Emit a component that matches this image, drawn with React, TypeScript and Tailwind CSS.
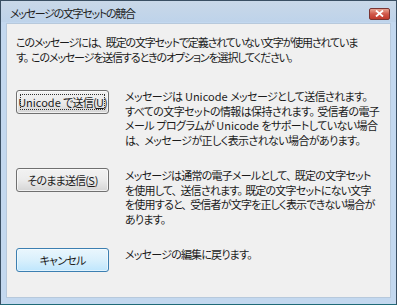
import React from "react";

const font = {
  fontFamily: '"Noto Sans CJK JP", "Noto Sans", sans-serif',
  fontFeatureSettings: '"palt"',
};

function J({ t }: { t: string }) {
  const parts: React.ReactNode[] = [];
  let buf = "";
  let k = 0;
  for (const ch of t) {
    if (ch === "、" || ch === "。") {
      if (buf) parts.push(buf);
      buf = "";
      parts.push(
        <span key={k++} className={ch === "、" ? "mr-[4px]" : "mr-[3px]"}>
          {ch}
        </span>
      );
    } else {
      buf += ch;
    }
  }
  if (buf) parts.push(buf);
  return <>{parts}</>;
}

function L({ children }: { children: React.ReactNode }) {
  return <span className="tracking-normal">{children}</span>;
}

function Btn({
  children,
  variant,
}: {
  children: React.ReactNode;
  variant: "focus" | "normal" | "default";
}) {
  const base =
    "relative w-[93px] h-[24px] rounded-[3px] flex items-center justify-center text-[11px] tracking-[-0.8px] text-[#1b1b1b] whitespace-nowrap";
  const styles =
    variant === "default"
      ? "border border-[#3c7fb1] bg-gradient-to-b from-[#eaf6fd] via-[#d9f0fc] to-[#bee6fd] shadow-[inset_0_0_0_1px_#ffffff80]"
      : "border border-[#707070] bg-gradient-to-b from-[#f2f2f2] via-[#ebebeb] to-[#d5d5d5] shadow-[inset_0_0_0_1px_#ffffffa0]";
  return (
    <div className={`${base} ${styles}`}>
      {variant === "focus" && (
        <div className="absolute inset-[3px] border border-dotted border-[#333]" />
      )}
      <span className="relative">{children}</span>
    </div>
  );
}

export default function App() {
  return (
    <div
      className="w-[397px] h-[305px] flex flex-col border border-[#3a4f63] border-b-[#1f6a78] bg-[#c3d8ef] text-[#1b1b1b]"
      style={font}
    >
      {/* Title bar */}
      <div className="h-[21px] shrink-0 flex items-center pl-[9px] pr-[6px] bg-gradient-to-b from-[#c9d8e8] to-[#bed3ea]">
        <span className="text-[11px] tracking-[-1.3px] text-[#1e1e1e] whitespace-nowrap flex-1 mt-[3px]">
          メッセージの文字セットの競合
        </span>
        <div className="w-[21px] h-[12px] mt-[4px] rounded-[2px] border border-[#7a3432] bg-gradient-to-b from-[#e8a493] via-[#d0574a] to-[#c0392b] flex items-center justify-center">
          <svg width="9" height="7" viewBox="0 0 9 7">
            <path d="M1 0.5 L8 6.5 M8 0.5 L1 6.5" stroke="#ffffff" strokeWidth="1.8" />
          </svg>
        </div>
      </div>
      {/* Content */}
      <div className="flex-1 mx-[5px] mt-[1px] mb-[6px] bg-[#f0f0f0] border border-[#b7c9dc] pl-[9px] pt-[11px]">
        <div className="text-[11px] tracking-[-1.15px] leading-[15px] whitespace-nowrap">
          <div>
            <J t="このメッセージには、既定の文字セットで定義されていない文字が使用されていま" />
          </div>
          <div>
            <J t="す。このメッセージを送信するときのオプションを選択してください" />
            。
          </div>
        </div>
        <div className="mt-[24px] flex flex-col gap-[21px]">
          <div className="flex gap-[16px]">
            <div className="pt-[1px]">
              <Btn variant="focus">
                <L>Unicode </L>で送信(<span className="underline tracking-normal">U</span>)
              </Btn>
            </div>
            <div className="text-[11px] tracking-[-0.6px] leading-[14.5px] whitespace-nowrap">
              <div>
                メッセージは<L> Unicode </L>
                <J t="メッセージとして送信されます" />。
              </div>
              <div>
                <J t="すべての文字セットの情報は保持されます。受信者の電子" />
              </div>
              <div>
                メール<L> </L>プログラムが<L> Unicode </L>をサポートしていない場合
              </div>
              <div>
                <J t="は、メッセージが正しく表示されない場合があります" />。
              </div>
            </div>
          </div>
          <div className="flex gap-[16px]">
            <div>
              <Btn variant="normal">
                そのまま送信(<span className="underline tracking-normal">S</span>)
              </Btn>
            </div>
            <div className="text-[11px] tracking-[-0.8px] leading-[14.5px] whitespace-nowrap">
              <div>
                <J t="メッセージは通常の電子メールとして、既定の文字セット" />
              </div>
              <div>
                <J t="を使用して、送信されます。既定の文字セットにない文字" />
              </div>
              <div>
                <J t="を使用すると、受信者が文字を正しく表示できない場合が" />
              </div>
              <div>あります。</div>
            </div>
          </div>
          <div className="flex gap-[16px]">
            <div className="pt-[1px]">
              <Btn variant="default">キャンセル</Btn>
            </div>
            <div className="text-[11px] tracking-[-0.8px] leading-[14.5px] whitespace-nowrap">
              <div>メッセージの編集に戻ります。</div>
            </div>
          </div>
        </div>
      </div>
    </div>
  );
}
